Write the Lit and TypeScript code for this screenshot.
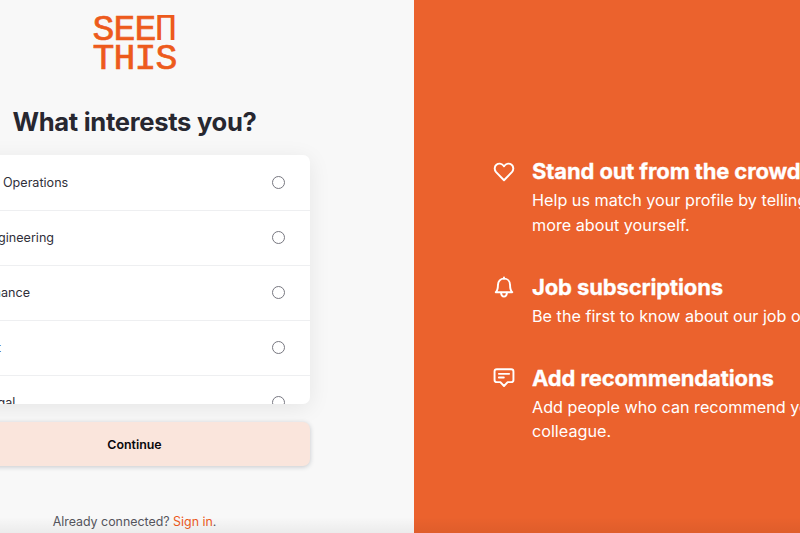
import { LitElement, html, css, svg } from "lit";
import { customElement } from "lit/decorators.js";

const departments = ["Ad Operations", "Engineering", "Finance", "Art", "Legal"];

const heart = svg`<path d="M12 21 L3.4 12.2 C1.2 9.7 1.4 6.2 3.7 4.2 C6 2.2 9.3 2.5 11.3 4.9 L12 5.8 L12.7 4.9 C14.7 2.5 18 2.2 20.3 4.2 C22.6 6.2 22.8 9.7 20.6 12.2 Z"/>`;
const bell = svg`<path d="M3 16.6 C5 14.8 5.4 12.8 5.4 8.8 C5.4 4.6 8.2 1.8 12 1.8 C15.8 1.8 18.6 4.6 18.6 8.8 C18.6 12.8 19 14.8 21 16.6 Z"/><path d="M12 .4 V1.8"/><path d="M8.8 17.2 C9 20 10.2 21.4 12 21.4 C13.8 21.4 15 20 15.2 17.2"/>`;
const bubble = svg`<path d="M4.2 1.4 H19.8 Q22.3 1.4 22.3 3.9 V13 Q22.3 15.4 19.8 15.4 H16 L12 19.6 L8 15.4 H4.2 Q1.7 15.4 1.7 13 V3.9 Q1.7 1.4 4.2 1.4 Z"/><path d="M6.4 6.4 H17.6 M6.4 10.4 H11.8"/>`;

const benefits = [
  { icon: heart, title: "Stand out from the crowd", lines: ["Help us match your profile by telling us", "more about yourself."] },
  { icon: bell, title: "Job subscriptions", lines: ["Be the first to know about our job openings."] },
  { icon: bubble, title: "Add recommendations", lines: ["Add people who can recommend you as a", "colleague."] },
];

@customElement("app-root")
export class AppRoot extends LitElement {
  static styles = css`
    :host {
      display: flex;
      width: 800px;
      height: 533px;
      overflow: hidden;
      position: relative;
      font-family: Inter, "Liberation Sans", sans-serif;
      background: #f8f8f8;
    }
    :host::after {
      content: "";
      position: absolute;
      inset: auto 0 0 0;
      height: 16px;
      background: linear-gradient(transparent, rgba(0, 0, 0, 0.05));
    }
    .form {
      box-sizing: border-box;
      flex: none;
      width: 559px;
      margin-left: -145px;
      padding-top: 14px;
      display: flex;
      flex-direction: column;
      align-items: center;
    }
    .logo {
      display: flex;
      flex-direction: column;
      height: 61px;
      color: #ed5a1c;
      font-family: "Liberation Mono", monospace;
      font-size: 36.5px;
      line-height: 30.5px;
      letter-spacing: -0.9px;
      -webkit-text-stroke: 0.7px #ed5a1c;
    }
    .logo > span {
      display: block;
      height: 30.5px;
      white-space: nowrap;
    }
    .pi {
      display: inline-block;
      width: 21px;
      font-family: "DejaVu Sans Mono", monospace;
      font-size: 33px;
      line-height: 30px;
      letter-spacing: 0;
      -webkit-text-stroke: 0;
      transform: scaleX(1.1);
    }
    h1 {
      margin: 29px 0 0;
      font-size: 25.6px;
      letter-spacing: -0.3px;
      line-height: 36px;
      font-weight: 700;
      color: #272730;
      white-space: nowrap;
    }
    .list {
      width: 351px;
      height: 249px;
      margin-top: 15px;
      flex: none;
      overflow: hidden;
      border-radius: 7px;
      background: #fff;
      box-shadow: 0 4px 22px rgba(0, 0, 0, 0.08);
    }
    .row {
      box-sizing: border-box;
      height: 55px;
      display: flex;
      align-items: center;
      justify-content: space-between;
      padding: 0 25px 0 24px;
      font-size: 12.6px;
      color: #30303a;
    }
    .row + .row {
      box-shadow: inset 0 1px #eeeff1;
    }
    .radio {
      box-sizing: border-box;
      width: 13px;
      height: 13px;
      border: 1px solid #777780;
      border-radius: 50%;
    }
    .continue {
      width: 351px;
      height: 44px;
      margin-top: 18px;
      padding: 0;
      flex: none;
      border: 0;
      border-radius: 7px;
      background: #fae5dc;
      box-shadow: 0 1px 5px rgba(20, 30, 50, 0.22);
      font: 600 12.4px Inter, sans-serif;
      color: #08080c;
    }
    .signin {
      margin-top: 46px;
      font-size: 12.4px;
      line-height: 20px;
      color: #55555d;
      white-space: nowrap;
    }
    .signin span {
      color: #ed5a1c;
    }
    .benefits {
      box-sizing: border-box;
      flex: none;
      width: 559px;
      padding: 157px 0 0 79px;
      background: #eb622d;
      color: #fff;
      display: flex;
      flex-direction: column;
      gap: 35.5px;
    }
    .benefit {
      display: flex;
      gap: 17px;
    }
    .icon {
      width: 22px;
      height: 22px;
      margin-top: 4px;
      flex: none;
      overflow: visible;
      fill: none;
      stroke: #fff;
      stroke-width: 2.1;
      stroke-linejoin: round;
      stroke-linecap: round;
    }
    h2 {
      margin: 0 0 2px;
      font-size: 22px;
      line-height: 29px;
      letter-spacing: -0.12px;
      -webkit-text-stroke: 0.3px #fff;
      font-weight: 700;
      white-space: nowrap;
    }
    .line {
      font-size: 16.2px;
      line-height: 24.5px;
      white-space: nowrap;
    }
  `;

  render() {
    return html`
      <section class="form">
        <div class="logo"><span>SEE<span class="pi">Π</span></span><span>THIS</span></div>
        <h1>What interests you?</h1>
        <div class="list">
          ${departments.map((name) => html`<div class="row"><span>${name}</span><span class="radio"></span></div>`)}
        </div>
        <button class="continue">Continue</button>
        <div class="signin">Already connected? <span>Sign in</span>.</div>
      </section>
      <section class="benefits">
        ${benefits.map(
          (b) => html`<div class="benefit">
            <svg class="icon" viewBox="0 0 24 24">${b.icon}</svg>
            <div>
              <h2>${b.title}</h2>
              ${b.lines.map((line) => html`<div class="line">${line}</div>`)}
            </div>
          </div>`
        )}
      </section>
    `;
  }
}
